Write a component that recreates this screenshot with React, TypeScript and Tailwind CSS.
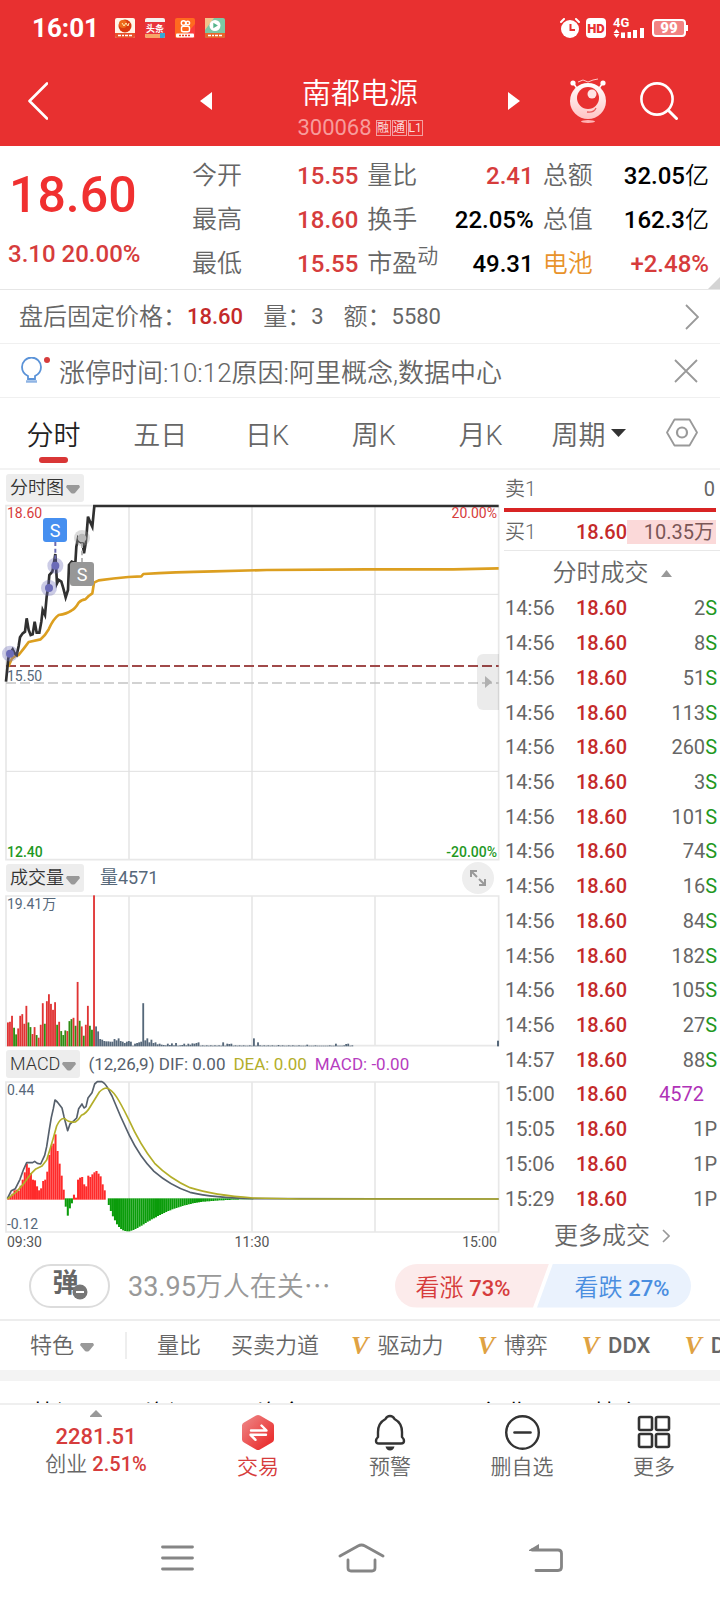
import type { FC, ReactNode } from 'react'
import { useState } from 'react'

const QUOTE_COLUMNS: { label: string; sup?: string; value: string; labelClass?: string; valueClass: string }[][] = [
  [
    { label: '今开', value: '15.55', valueClass: 'text-[#d63c3c]' },
    { label: '最高', value: '18.60', valueClass: 'text-[#d63c3c]' },
    { label: '最低', value: '15.55', valueClass: 'text-[#d63c3c]' },
  ],
  [
    { label: '量比', value: '2.41', valueClass: 'text-[#d63c3c]' },
    { label: '换手', value: '22.05%', valueClass: 'text-black' },
    { label: '市盈', sup: '动', value: '49.31', valueClass: 'text-black' },
  ],
  [
    { label: '总额', value: '32.05亿', valueClass: 'text-black' },
    { label: '总值', value: '162.3亿', valueClass: 'text-black' },
    { label: '电池', value: '+2.48%', labelClass: 'text-[#e8922a]', valueClass: 'text-[#d63c3c]' },
  ],
]

const PERIODS = ['分时', '五日', '日K', '周K', '月K']

const TRADES: [string, string, string][] = [
  ['14:56', '2', 'S'],
  ['14:56', '8', 'S'],
  ['14:56', '51', 'S'],
  ['14:56', '113', 'S'],
  ['14:56', '260', 'S'],
  ['14:56', '3', 'S'],
  ['14:56', '101', 'S'],
  ['14:56', '74', 'S'],
  ['14:56', '16', 'S'],
  ['14:56', '84', 'S'],
  ['14:56', '182', 'S'],
  ['14:56', '105', 'S'],
  ['14:56', '27', 'S'],
  ['14:57', '88', 'S'],
  ['15:00', '4572', ''],
  ['15:05', '1', 'P'],
  ['15:06', '1', 'P'],
  ['15:29', '1', 'P'],
]

const PRICE_LINE =
  '18,845 25,775 30,760 38,748 44,760 50,765 56,738 60,712 68,700 75,695 80,655 86,690 92,705 98,703 104,665 110,698 118,698 124,665 128,630 135,645 140,590 145,560 148,525 157,515 160,500 166,462 171,550 176,540 184,545 190,565 197,592 204,570 207,495 215,485 226,490 229,440 234,415 240,425 248,430 252,460 257,430 260,400 264,350 270,365 277,380 283,318 1496,318'

const AVG_LINE =
  'M25 800 L36 775 L46 768 L56 765 L74 742 L86 726 L122 718 Q136 706 146 688 Q160 656 176 645 Q200 642 214 632 Q226 626 236 608 Q246 598 256 598 L266 588 L277 580 L282 548 L296 541 Q340 535 385 531 L424 529 L430 522 Q520 516 640 514 L800 510 L1100 508 L1360 508 L1496 505'

// 每分钟成交量，r 红 g 绿 s 灰蓝
const VOLUMES =
  '72r 74r 92r 56g 36g 54r 92r 97r 68r 122r 72g 58g 37r 58r 34g 26r 65r 130r 68g 136r 157r 128r 110r 133r 65g 74r 46g 34g 48g 46r 76g 82g 86r 62g 194r 77g 60r 32g 65r 122r 62g 50g 455r 60s 45s 22s 20s 16s 15s 15s 14s 14s 22s 18s 24s 16s 14s 10s 14s 16s 14s 2s 8s 10s 12s 14s 130s 18s 24s 12s 20s 10s 12s 6s 8s 5s 4s 3s 8s 4s 9s 3s 10s 2s 3s 4s 8s 3s 8s 5s 9s 8s 10s 12s 2s 3s 2s 3s 2s 3s 2s 3s 2s 3s 2s 12s 2s 8s 7s 8s 2s 3s 2s 3s 2s 3s 2s 2s 3s 2s 24s 2s 12s 3s 2s 3s 2s 3s 2s 3s 2s 2s 4s 2s 3s 2s 2s 3s 2s 3s 2s 2s 3s 2s 2s 2s 5s 2s 2s 2s 3s 2s 2s 2s 2s 2s 2s 3s 2s 2s 8s 2s 2s 2s 3s 7s 8s 2s 3s'
    .split(' ')
    .map((v) => ({ h: parseInt(v, 10), kind: v.slice(-1) }))

const VOLUME_FILL: Record<string, string> = { r: '#e03434', g: '#2f8c12', s: '#56687a' }

const MACD_BARS = [
  4, 10, 18, 28, 30, 26, 42, 60, 82, 108, 96, 80, 60, 58, 40, 28, 34, 56, 60, 84, 134, 162, 168, 196, 146, 108, 72, 30,
  -25, -52, -30, -15, 15, 6, 60, 66, 68, 46, 40, 72, 68, 76, 82, 86, 78, 70, 46, 28, 0, -20, -38, -54, -66, -78, -86,
  -92, -96, -98, -99, -99, -97, -95, -92, -89, -85, -82, -78, -74, -70, -67, -63, -60, -57, -53, -50, -47, -44, -41,
  -38, -36, -33, -31, -29, -27, -25, -23, -21, -20, -18, -17, -15, -14, -13, -12, -11, -10, -10, -9, -9, -8, -8, -7,
  -7, -6, -6, -6, -5, -5, -5, -4, -4, -4, -4, -3, -3, -3, -3, -3, -3, -3,
]

const DIF_LINE =
  'M22 1076 L34 1052 L46 1046 L60 1018 L70 990 L80 968 L98 968 L104 964 L112 970 L122 972 L134 946 L140 920 L148 868 L154 832 L160 806 L165 780 L172 786 L186 804 L192 830 L203 872 L210 852 L222 842 L230 834 L236 806 L246 792 L252 804 L258 800 L264 774 L276 758 L284 732 L292 725 L306 725 C320 730 324 748 336 768 Q360 828 388 886 Q420 952 462 994 Q510 1036 570 1057 Q640 1073 760 1076 L1496 1077'

const DEA_LINE =
  'M22 1077 L50 1055 L72 1030 L94 1000 L106 988 L126 978 L140 960 L150 928 L160 894 L170 858 Q182 832 194 836 Q206 848 226 846 Q236 840 244 826 Q260 820 272 798 L298 756 Q310 744 320 744 C340 748 358 782 386 838 Q420 914 464 970 Q510 1016 570 1043 Q640 1066 760 1074 L900 1077 L1496 1077'

const Caret: FC<{ className?: string }> = ({ className = '' }) => (
  <svg viewBox="0 0 14 9" className={`h-[9px] w-[14px] shrink-0 ${className}`} aria-hidden="true">
    <path d="M1 0H13L14 2 9 8 Q7 9 5 8 L0 2Z" fill="currentColor" />
  </svg>
)

const Grid: FC<{ y: number; height: number }> = ({ y, height }) => (
  <g stroke="#e8e8e8" strokeWidth="5" fill="none">
    <path d={`M18 ${y}H1496V${y + height}H18Z`} />
    <path d={`M387 ${y}v${height}M756 ${y}v${height}M1125 ${y}v${height}`} />
  </g>
)

const ChartPicker: FC<{ children: ReactNode }> = ({ children }) => (
  <button type="button" className="flex h-7 items-center gap-[2px] rounded-[3px] bg-[#ededed] px-1 text-[18px] leading-7 font-[350] text-[#333]">
    {children}
    <Caret className="mt-1 text-[#999]" />
  </button>
)

const StatusBar: FC = () => (
  <div className="flex h-14 items-center px-8 text-white">
    <span className="text-[26px] leading-7 font-bold">16:01</span>
    <div className="ml-4 flex flex-1 gap-[10px]">
      <svg viewBox="0 0 20 20" className="size-5" aria-hidden="true">
        <rect width="20" height="20" rx="2" fill="#fff6e8" />
        <circle cx="10" cy="8" r="6.500" fill="#d93a10" />
        <circle cx="8" cy="6" r="4" fill="#ee6a1c" />
        <path d="m7 5 2 3 2-3 2 3 1-3" stroke="#ffe9b0" strokeWidth="1" fill="none" />
        <path d="M0 15h20v3a2 2 0 0 1-2 2H2a2 2 0 0 1-2-2Z" fill="#e8502a" />
        <path d="M3 17.500h3m1 0h2m1 0h3m1 0h3" stroke="#fff" strokeWidth="1.600" />
      </svg>
      <svg viewBox="0 0 20 20" className="size-5" aria-hidden="true">
        <rect width="20" height="20" rx="2" fill="#f4f1ef" />
        <rect y="4" width="20" height="12" fill="#e8343c" />
        <text x="10" y="13.500" fontSize="9" fontWeight="700" fill="#fff" textAnchor="middle">头条</text>
        <path d="M0 16h20v2a2 2 0 0 1-2 2H2a2 2 0 0 1-2-2Z" fill="#f7a368" />
        <path d="M15 15h5v3a2 2 0 0 1-2 2h-3Z" fill="#35a7d6" />
      </svg>
      <svg viewBox="0 0 20 20" className="size-5" aria-hidden="true">
        <rect width="20" height="20" rx="2" fill="#ff6a1f" />
        <path d="M8 20 20 6v12a2 2 0 0 1-2 2Z" fill="#fb3b3b" />
        <g fill="none" stroke="#fff" strokeWidth="1.400">
          <circle cx="8.500" cy="5" r="2.200" />
          <circle cx="12.800" cy="5" r="1.800" />
          <rect x="6.500" y="8.200" width="8" height="5.500" rx="1.800" />
        </g>
        <rect x="1" y="15.500" width="18" height="4" rx="1" fill="#fff" />
        <path d="M4 17.500h12" stroke="#e8452a" strokeWidth="1.600" strokeDasharray="2 1" />
      </svg>
      <svg viewBox="0 0 20 20" className="size-5" aria-hidden="true">
        <rect width="20" height="20" rx="2" fill="#7cc7a4" />
        <path d="M0 0h9L0 12Z" fill="#f2c28c" />
        <circle cx="10" cy="7.500" r="5.500" fill="#fff" />
        <path d="m8.300 4.800 4.600 2.700-4.600 2.700Z" fill="#55b48c" />
        <path d="M0 15h20v3a2 2 0 0 1-2 2H2a2 2 0 0 1-2-2Z" fill="#e8642a" />
        <path d="M3 17.500h3m1 0h2m1 0h3m1 0h3" stroke="#fff" strokeWidth="1.600" />
      </svg>
    </div>
    <div className="flex items-center gap-[6px]">
      <svg viewBox="0 0 20 20" className="size-5" aria-hidden="true">
        <circle cx="10" cy="11" r="9" fill="#fff" />
        <path d="m1 4 3-3M19 4l-3-3" stroke="#fff" strokeWidth="2" strokeLinecap="round" />
        <path d="M10.500 6v6H15" stroke="#e83030" strokeWidth="2" fill="none" />
      </svg>
      <span className="flex h-5 w-5 items-center justify-center rounded-[4px] bg-white text-[13px] leading-none font-black text-[#e83030]">HD</span>
      <div className="relative h-5 w-[34px]">
        <span className="absolute -top-[2px] left-px text-[13px] leading-[14px] font-bold">4G</span>
        <svg viewBox="0 0 34 20" className="h-5 w-[34px]" aria-hidden="true">
          <path d="m4.500 11 3 4h-6ZM4.500 20l3-4h-6Z" fill="#fff" />
          <path d="M9 14.500h4V20H9ZM15.500 14h3.500v6h-3.500ZM21 12h4v8h-4ZM28 10h4v10h-4Z" fill="#fff" />
        </svg>
      </div>
      <div className="flex items-center">
        <span className="flex h-[18px] w-[34px] items-center justify-center rounded-[4px] border-2 border-white bg-[#f28282] text-[15px] leading-none font-black">99</span>
        <span className="h-[6px] w-[2px] bg-white" />
      </div>
    </div>
  </div>
)

const TitleBar: FC = () => (
  <div className="grid h-[90px] grid-cols-[1fr_320px_1fr] items-center text-white">
    <button type="button" aria-label="返回" className="justify-self-start pl-[28px]">
      <svg viewBox="0 0 20 38" className="h-[38px] w-5" aria-hidden="true">
        <path d="M19 1.500 1.500 19 19 36.500" fill="none" stroke="currentColor" strokeWidth="2.600" strokeLinecap="round" strokeLinejoin="round" />
      </svg>
    </button>
    <div className="flex items-center justify-between">
      <button type="button" aria-label="上一只">
        <svg viewBox="0 0 12 18" className="h-[18px] w-3" aria-hidden="true"><path d="M12 0v18L0 9Z" fill="currentColor" /></svg>
      </button>
      <div className="flex flex-col items-center pt-[15px]">
        <h1 className="text-[29px] leading-[38px] font-[350]">南都电源</h1>
        <div className="flex items-center gap-1 text-[22px] leading-[30px] text-[#f79c9c]">
          300068
          <span className="flex gap-px text-[12px] leading-[14px] text-[#fbdcdc]">
            <span className="flex w-[15px] justify-center border border-[#f4a0a0]">融</span>
            <span className="flex w-[15px] justify-center border border-[#f4a0a0]">通</span>
            <span className="flex w-[15px] justify-center border border-[#f4a0a0]">L1</span>
          </span>
        </div>
      </div>
      <button type="button" aria-label="下一只">
        <svg viewBox="0 0 12 18" className="h-[18px] w-3" aria-hidden="true"><path d="M0 0v18L12 9Z" fill="currentColor" /></svg>
      </button>
    </div>
    <div className="flex items-center justify-end gap-[33px] pr-[42px]">
      <button type="button" aria-label="智能助手">
        <svg viewBox="0 0 38 46" className="h-[46px] w-[38px]" aria-hidden="true">
          <defs>
            <linearGradient id="bot" x1="0" y1="0" x2="0" y2="1">
              <stop offset="0" stopColor="#fff" />
              <stop offset="1" stopColor="#ffc4c4" />
            </linearGradient>
          </defs>
          <circle cx="4" cy="5" r="2.600" fill="#fff" />
          <circle cx="34" cy="5" r="2.600" fill="#fff" />
          <path d="m5 6 4 6M33 6l-4 6" stroke="#fff" strokeWidth="1.500" />
          <path d="m9 4 5-2 5 2 5-2 5-1" stroke="#ffc9c9" strokeWidth="1" fill="none" />
          <circle cx="19" cy="23" r="18" fill="url(#bot)" />
          <circle cx="19" cy="20" r="11" fill="#e83030" />
          <circle cx="23" cy="16" r="4.500" fill="#ffe3e3" />
          <path d="M18 34q7 1 9-4" stroke="#e85a5a" strokeWidth="1.300" fill="none" />
          <ellipse cx="19" cy="43.500" rx="7" ry="1.500" fill="#ffb3b3" />
        </svg>
      </button>
      <button type="button" aria-label="搜索">
        <svg viewBox="0 0 38 38" className="size-[38px]" aria-hidden="true">
          <circle cx="17" cy="17" r="15.600" fill="none" stroke="currentColor" strokeWidth="2.600" />
          <path d="m28.500 28.500 8 8" stroke="currentColor" strokeWidth="3" strokeLinecap="round" />
        </svg>
      </button>
    </div>
  </div>
)

const QuotePanel: FC = () => (
  <section className="relative flex border-b border-[#e6e6e6] pt-2 pr-[11px] pb-[3px]">
    <div className="w-[192px] shrink-0">
      <div className="pt-[13px] pl-[9px] text-[50px] leading-[56px] font-medium text-[#f03030]">18.60</div>
      <div className="pt-4 pl-2 text-[24px] leading-[30px] font-medium text-[#d63c3c]">3.10 20.00%</div>
    </div>
    <div className="grid flex-1 grid-cols-3 gap-[9px]">
      {QUOTE_COLUMNS.map((column, i) => (
        <dl key={i}>
          {column.map((item) => (
            <div key={item.label} className="flex h-11 items-center justify-between">
              <dt className={`flex text-[25px] leading-9 font-[350] ${item.labelClass ?? 'text-[#666]'}`}>
                {item.label}
                {item.sup && <sup className="top-0 text-[21px] leading-5">{item.sup}</sup>}
              </dt>
              <dd className={`text-[24px] leading-9 font-medium ${item.valueClass}`}>
                {item.value.replace('亿', '')}
                {item.value.endsWith('亿') && <span className="font-[350]">亿</span>}
              </dd>
            </div>
          ))}
        </dl>
      ))}
    </div>
    <svg viewBox="0 0 12 12" className="absolute right-0 bottom-0 size-3" aria-hidden="true">
      <path d="M12 0v12H0Z" fill="#d4d4d4" />
    </svg>
  </section>
)

const PriceChart: FC = () => (
  <div className="relative">
    <svg viewBox="18 315 1479 1065" preserveAspectRatio="none" className="block h-[355px] w-full overflow-visible" aria-hidden="true">
      <Grid y={317} height={1062} />
      <path d="M18 583H1496M18 1114H1496" stroke="#e0e0e0" strokeWidth="3" />
      <path d="M18 849H1496" stroke="#c4c4c4" strokeWidth="5" strokeDasharray="30 12" />
      <path d="M18 798H1496" stroke="#a04a4a" strokeWidth="6" strokeDasharray="30 12" />
      <path d={AVG_LINE} fill="none" stroke="#dc9f20" strokeWidth="8" strokeLinejoin="round" />
      <polyline points={PRICE_LINE} fill="none" stroke="#303030" strokeWidth="8" />
      <path d="M166 426v50" stroke="#6a6ab0" strokeWidth="6" strokeDasharray="12 8" />
      <path d="M246 430v60" stroke="#b5b5b5" strokeWidth="6" strokeDasharray="14 8" />
      {[[30, 761], [147, 564], [166, 497]].map(([x, y]) => (
        <g key={x} fill="#6c6cb8">
          <circle cx={x} cy={y} r="24" opacity="0.35" />
          <circle cx={x} cy={y} r="12" />
        </g>
      ))}
      <circle cx="246" cy="414" r="24" fill="#999" opacity="0.35" />
      <circle cx="246" cy="414" r="13" fill="#b8b8b8" />
    </svg>
    <span className="absolute top-0 left-px text-[14px] leading-4 text-[#d63c3c]">18.60</span>
    <span className="absolute top-0 right-[2px] text-[14px] leading-4 text-[#d63c3c]">20.00%</span>
    <span className="absolute top-[163px] left-px text-[14px] leading-4 text-[#56687a]">15.50</span>
    <span className="absolute bottom-0 left-px text-[14px] leading-4 font-medium text-[#1f981f]">12.40</span>
    <span className="absolute right-[2px] bottom-0 text-[14px] leading-4 font-medium text-[#1f981f]">-20.00%</span>
    <span className="absolute top-[13px] left-[37px] flex size-6 items-center justify-center rounded-[3px] bg-[#468ff0] text-[18px] text-white">S</span>
    <span className="absolute top-[57px] left-[64px] flex size-6 items-center justify-center rounded-[3px] bg-[#979797] text-[18px] text-white">S</span>
    <button type="button" aria-label="展开" className="absolute top-[149px] right-0 flex h-14 w-[22px] items-center justify-center rounded-l-[6px] bg-black/8">
      <svg viewBox="0 0 7 12" className="h-3 w-[7px]" aria-hidden="true"><path d="M0 0 7 6 0 12Z" fill="#b0b0b0" /></svg>
    </button>
  </div>
)

const VolumeChart: FC = () => (
  <div className="relative">
    <svg viewBox="18 168 1479 452" preserveAspectRatio="none" className="block h-[150px] w-full overflow-visible" aria-hidden="true">
      <Grid y={168} height={451} />
      {VOLUMES.map(({ h, kind }, i) => (
        <rect key={i} x={21 + i * 6.15} y={621 - h} width="5.500" height={h} fill={VOLUME_FILL[kind]} />
      ))}
      <rect x="1491" y="604" width="6" height="17" fill="#56687a" />
    </svg>
    <span className="absolute top-0 left-px text-[14px] leading-4 text-[#56687a]">19.41万</span>
  </div>
)

const MacdChart: FC = () => (
  <div className="relative">
    <svg viewBox="18 726 1479 450" preserveAspectRatio="none" className="block h-[150px] w-full overflow-visible" aria-hidden="true">
      <Grid y={726} height={450} />
      {MACD_BARS.map((v, i) => (
        <rect key={i} x={22 + i * 6.15} y={v > 0 ? 1079 - v : 1075} width="6.150" height={Math.abs(v)} fill={v > 0 ? '#ff2a2a' : '#0a9c0a'} />
      ))}
      <path d={DIF_LINE} fill="none" stroke="#56606c" strokeWidth="5" strokeLinejoin="round" />
      <path d={DEA_LINE} fill="none" stroke="#b3ae2a" strokeWidth="5" strokeLinejoin="round" />
    </svg>
    <span className="absolute top-0 left-px text-[14px] leading-4 text-[#56687a]">0.44</span>
    <span className="absolute bottom-0 left-px text-[14px] leading-4 text-[#56687a]">-0.12</span>
  </div>
)

const ChartColumn: FC = () => (
  <div className="min-w-0 flex-1 pr-[5px] pl-[6px]">
    <div className="flex h-[35px] items-center">
      <ChartPicker>分时图</ChartPicker>
    </div>
    <PriceChart />
    <div className="flex h-9 items-center">
      <ChartPicker>成交量</ChartPicker>
      <span className="ml-4 flex-1 text-[18px] leading-6 text-[#56687a]">量4571</span>
      <button type="button" aria-label="全屏" className="mr-[5px] flex size-8 items-center justify-center rounded-full bg-[#eee]">
        <svg viewBox="0 0 18 18" className="size-[18px]" aria-hidden="true" fill="none" stroke="#999" strokeWidth="2">
          <path d="M2 8V2h6M2 2l6 6M16 10v6h-6M16 16l-6-6" />
        </svg>
      </button>
    </div>
    <VolumeChart />
    <div className="flex h-9 items-center text-[17px] leading-6 whitespace-nowrap">
      <ChartPicker>MACD</ChartPicker>
      <span className="ml-2 text-[#56606c]">(12,26,9) DIF: 0.00</span>
      <span className="ml-2 text-[#b3ae2a]">DEA: 0.00</span>
      <span className="ml-2 text-[#b63cc0]">MACD: -0.00</span>
    </div>
    <MacdChart />
    <div className="flex h-5 items-center justify-between pr-[2px] pl-px text-[14px] leading-4 text-[#555]">
      <span>09:30</span>
      <span>11:30</span>
      <span>15:00</span>
    </div>
  </div>
)

const TradeColumn: FC = () => (
  <aside className="flex w-[216px] shrink-0 flex-col text-[20px] leading-7 text-[#666]">
    <div className="flex h-[38px] items-center justify-between pr-[5px] pl-px">
      <span className="font-[350]">卖1</span>
      <span>0</span>
    </div>
    <div className="mr-1 h-1 bg-[#d82424]" />
    <div className="flex h-[38px] items-center pt-[2px] pr-1 pl-px">
      <span className="w-[71px] font-[350]">买1</span>
      <span className="w-[51px] font-medium text-[#c42a2a]">18.60</span>
      <span className="h-6 flex-1 bg-[#fbd9d9] pr-[2px] text-right leading-6 text-[#7a5656]">10.35万</span>
    </div>
    <button type="button" className="flex h-[41px] items-center justify-center gap-3 border-t border-[#e8e8e8] pt-1 text-[24px] leading-8 font-[350]">
      分时成交
      <svg viewBox="0 0 11 7" className="h-[7px] w-[11px]" aria-hidden="true"><path d="M5.500 0 11 7H0Z" fill="#999" /></svg>
    </button>
    <div className="min-h-0 flex-1">
      <table className="h-[625px] w-full border-collapse">
        <tbody>
          {TRADES.map(([time, count, side], i) => (
            <tr key={i} className="leading-6">
              <td className="w-[72px] p-0 pl-px">{time}</td>
              <td className="p-0 font-medium text-[#c42a2a]">18.60</td>
              <td className={side ? 'p-0 pr-[3px] text-right' : 'p-0 pr-4 text-right text-[#b032b8]'}>
                {count}
                <span className={side === 'S' ? 'text-[#1f981f]' : ''}>{side}</span>
              </td>
            </tr>
          ))}
        </tbody>
      </table>
    </div>
    <button type="button" className="flex h-9 items-center justify-center gap-3 pt-1 text-[24px] leading-8 font-[350]">
      更多成交
      <svg viewBox="0 0 8 14" className="h-[14px] w-2" aria-hidden="true"><path d="m1 1 6 6-6 6" fill="none" stroke="#999" strokeWidth="1.600" /></svg>
    </button>
  </aside>
)

const GoldV: FC = () => (
  <span className="font-['Liberation_Serif',serif] text-[26px] leading-7 font-bold text-[#dfa243] italic" aria-hidden="true">V</span>
)

const FeatureTabs: FC = () => (
  <nav className="flex h-[49px] items-center overflow-hidden text-[22px] leading-8 font-[350] whitespace-nowrap text-[#666]">
    <button type="button" className="flex shrink-0 items-center gap-[6px] pl-[30px]">
      特色
      <Caret className="mt-1 text-[#999]" />
    </button>
    <span className="ml-[31px] h-[27px] w-[2px] shrink-0 bg-[#eee]" />
    <div className="ml-[30px] flex shrink-0 gap-[30px]">
      <a href="#volume-ratio">量比</a>
      <a href="#force">买卖力道</a>
    </div>
    <div className="ml-8 flex shrink-0 gap-[34px]">
      <a href="#drive" className="flex items-center gap-[9px]"><GoldV />驱动力</a>
      <a href="#game" className="flex items-center gap-[9px]"><GoldV />博弈</a>
      <a href="#ddx" className="flex items-center gap-[9px] font-medium"><GoldV />DDX</a>
      <a href="#ddy" className="flex items-center gap-[9px] font-medium"><GoldV />DDY</a>
    </div>
  </nav>
)

const BottomNav: FC = () => (
  <nav className="grid h-[86px] grid-cols-[192px_repeat(4,1fr)] border-t-2 border-[#efefef] text-[21px] leading-7 font-[350] text-[#666]">
    <button type="button" className="flex flex-col items-center pt-[5px]">
      <svg viewBox="0 0 12 7" className="h-[7px] w-3" aria-hidden="true"><path d="M6 0 12 6v1H0V6Z" fill="#999" /></svg>
      <span className="pt-[7px] text-[22px] leading-[26px] font-medium text-[#d63c3c]">2281.51</span>
      <span>创业 <span className="text-[20px] font-medium text-[#d63c3c]">2.51%</span></span>
    </button>
    <button type="button" className="flex flex-col items-center gap-[2px] pt-[9px] text-[#d63c3c]">
      <svg viewBox="0 0 34 37" className="h-[37px] w-[34px]" aria-hidden="true">
        <defs>
          <linearGradient id="trade" x1="0" y1="0" x2="1" y2="1">
            <stop offset="0" stopColor="#ee8c8c" />
            <stop offset="0.800" stopColor="#ea3434" />
          </linearGradient>
        </defs>
        <path d="M15 1.500q2-1 4 0l12 7q2 1 2 3v14q0 2-2 3l-12 7q-2 1-4 0l-12-7q-2-1-2-3v-14q0-2 2-3Z" fill="url(#trade)" />
        <path d="M10 16.500h15.500l-5-5M25 20.800H9.500l5 5" fill="none" stroke="#fff" strokeWidth="2.400" strokeLinecap="round" strokeLinejoin="round" />
      </svg>
      交易
    </button>
    <button type="button" className="flex flex-col items-center gap-[2px] pt-[9px]">
      <svg viewBox="0 0 32 37" className="h-[37px] w-8" aria-hidden="true">
        <path d="M16 2q3 0 4.500 3Q28 9 28 18v5q2 2 2 4 0 2.500-3 2.500H5q-3 0-3-2.500 0-2 2-4v-5Q4 9 11.500 5 13 2 16 2Z" fill="none" stroke="#333" strokeWidth="2.400" strokeLinejoin="round" />
        <path d="M11.500 32.500h9q-1 4-4.500 4t-4.500-4Z" fill="#333" />
      </svg>
      预警
    </button>
    <button type="button" className="flex flex-col items-center gap-[2px] pt-[9px]">
      <svg viewBox="0 0 37 37" className="size-[37px]" aria-hidden="true">
        <circle cx="18.500" cy="18.500" r="16.300" fill="none" stroke="#333" strokeWidth="2.400" />
        <path d="M10.500 18.500h16" stroke="#333" strokeWidth="2.600" strokeLinecap="round" />
      </svg>
      删自选
    </button>
    <button type="button" className="flex flex-col items-center gap-[2px] pt-[9px]">
      <svg viewBox="0 0 37 37" className="size-[37px]" aria-hidden="true" fill="none" stroke="#333" strokeWidth="2.600">
        <rect x="3" y="3" width="13" height="13" rx="1.500" />
        <rect x="20" y="3" width="13" height="13" rx="1.500" />
        <rect x="3" y="20" width="13" height="13" rx="1.500" />
        <rect x="20" y="20" width="13" height="13" rx="1.500" />
      </svg>
      更多
    </button>
  </nav>
)

const SystemNav: FC = () => (
  <div className="flex h-[109px] items-center justify-center gap-36 pt-8 pb-1 pl-1 text-[#858585]">
    <button type="button" aria-label="最近任务">
      <svg viewBox="0 0 33 26" className="h-[26px] w-[33px]" aria-hidden="true">
        <path d="M1.500 2h30M1.500 13h30M1.500 24h30" stroke="currentColor" strokeWidth="2.800" strokeLinecap="round" />
      </svg>
    </button>
    <button type="button" aria-label="主屏幕">
      <svg viewBox="0 0 47 30" className="h-[30px] w-[47px]" aria-hidden="true">
        <path d="M2 13 20 3q3.500-2 7 0l18 10M10 17v8q0 3 3 3h21q3 0 3-3v-8" fill="none" stroke="currentColor" strokeWidth="2.800" strokeLinecap="round" />
      </svg>
    </button>
    <button type="button" aria-label="返回">
      <svg viewBox="0 0 34 28" className="h-7 w-[34px]" aria-hidden="true">
        <path d="M3 6h26q3.500 0 3.500 3.500V23q0 3.500-3.500 3.500H7" fill="none" stroke="currentColor" strokeWidth="2.800" strokeLinecap="round" />
        <path d="M0 7V6L10 0v7Z" fill="currentColor" />
      </svg>
    </button>
  </div>
)

export default function App() {
  const [period, setPeriod] = useState('分时')
  const [showTip, setShowTip] = useState(true)

  return (
    <div className="min-h-screen bg-white font-['Roboto','Noto_Sans_CJK_SC',sans-serif] text-[#666]">
      <header className="bg-[#e83030]">
        <StatusBar />
        <TitleBar />
      </header>

      <QuotePanel />

      {/* 盘后固定价格 */}
      <div className="flex h-[54px] items-center border-b border-[#f0f0f0] pr-[21px] pl-[19px] text-[24px] leading-9 font-[350]">
        <span>盘后固定价格：</span>
        <span className="text-[22px] font-medium text-[#c42a2a]">18.60</span>
        <span className="ml-5">量：</span>
        <span className="text-[22px] font-normal">3</span>
        <span className="ml-5">额：</span>
        <span className="flex-1 text-[22px] font-normal">5580</span>
        <svg viewBox="0 0 14 26" className="h-[26px] w-[14px]" aria-hidden="true"><path d="m1 1 12 12L1 25" fill="none" stroke="#999" strokeWidth="1.800" /></svg>
      </div>

      {/* 涨停原因 */}
      {showTip && (
        <div className="flex h-[54px] items-center border-b border-[#f0f0f0] pr-[22px] pl-[21px] text-[26px] leading-9 font-[350]">
          <svg viewBox="0 0 30 28" className="h-7 w-[30px]" aria-hidden="true">
            <path d="M7 22v-3q-6-3-6-9a9.500 9.500 0 0 1 19 0q0 6-6 9v3Z" fill="none" stroke="#5b93d8" strokeWidth="1.800" />
            <path d="M5 24.500h11" stroke="#8fb4e4" strokeWidth="2.500" />
            <circle cx="26" cy="3" r="3" fill="#d63c3c" />
          </svg>
          <span className="ml-2 flex-1 pt-1">涨停时间:10:12原因:阿里概念,数据中心</span>
          <button type="button" aria-label="关闭" onClick={() => setShowTip(false)}>
            <svg viewBox="0 0 24 24" className="size-6" aria-hidden="true"><path d="m1 1 22 22M23 1 1 23" stroke="#999" strokeWidth="1.800" /></svg>
          </button>
        </div>
      )}

      {/* 周期切换 */}
      <nav className="flex h-[72px] border-b-2 border-[#f3f3f3] text-[27px] leading-10 font-[350]">
        {PERIODS.map((name) => (
          <button
            key={name}
            type="button"
            onClick={() => setPeriod(name)}
            className={`flex flex-1 flex-col items-center pt-[18px] ${period === name ? 'text-[#222]' : ''}`}
          >
            {name}
            {period === name && <span className="mt-px h-[6px] w-[29px] rounded-full bg-[#d93636]" />}
          </button>
        ))}
        <button type="button" className="flex w-[110px] items-start justify-center gap-[6px] pt-[18px]">
          周期
          <svg viewBox="0 0 15 8" className="mt-[13px] h-2 w-[15px]" aria-hidden="true"><path d="M0 0h15L7.500 8Z" fill="#333" /></svg>
        </button>
        <button type="button" aria-label="设置" className="flex w-[76px] items-start justify-center pt-5">
          <svg viewBox="0 0 32 29" className="h-[29px] w-8" aria-hidden="true" fill="none" stroke="#999">
            <path d="M8.500 1.500h15L31 14.500l-7.500 13h-15L1 14.500Z" strokeWidth="1.800" strokeLinejoin="round" />
            <circle cx="16" cy="14.500" r="5" strokeWidth="2.200" />
          </svg>
        </button>
      </nav>

      <main className="flex">
        <ChartColumn />
        <TradeColumn />
      </main>

      {/* 关注与看涨看跌 */}
      <div className="flex h-[69px] items-center border-b-2 border-[#ededed] px-[29px]">
        <button type="button" className="relative flex h-11 w-[81px] items-center justify-center rounded-full border-2 border-[#dcdcdc] pr-2 pb-1 text-[26px] font-bold text-[#666]">
          弹
          <svg viewBox="0 0 16 16" className="absolute right-5 bottom-[6px] size-4" aria-hidden="true">
            <circle cx="8" cy="8" r="7.500" fill="#777" />
            <path d="M4 8h8" stroke="#fff" strokeWidth="2" />
          </svg>
        </button>
        <span className="ml-[18px] flex-1 pt-[3px] text-[27px] leading-10 font-[350] whitespace-nowrap text-[#999]">
          <span className="font-normal">33.95</span>万人在关⋯
        </span>
        <button type="button" className="h-11 w-[154px] rounded-l-full bg-[#fcebeb] pt-1 pr-[18px] text-[24px] font-[350] text-[#d63c3c] [clip-path:polygon(0_0,100%_0,138px_100%,0_100%)]">
          看涨 <span className="text-[22px] font-medium">73%</span>
        </button>
        <button type="button" className="-ml-3 h-11 w-[154px] rounded-r-full bg-[#eaf2fd] pt-1 pl-4 text-[24px] font-[350] text-[#4a8ee0] [clip-path:polygon(16px_0,100%_0,100%_100%,0_100%)]">
          看跌 <span className="text-[22px] font-medium">27%</span>
        </button>
      </div>

      <FeatureTabs />
      <div className="h-[11px] bg-[#f3f3f3]" />

      {/* 资讯标签，只露出顶部 */}
      <nav className="flex h-[22px] gap-[66px] overflow-hidden pt-[17px] pl-[33px] text-[23px] leading-8 whitespace-nowrap text-black">
        <a href="#flash">快讯</a>
        <a href="#news">资讯</a>
        <a href="#funds" className="mr-[113px]">资金</a>
        <a href="#industry">行业</a>
        <a href="#position">持仓</a>
      </nav>

      <BottomNav />
      <SystemNav />
    </div>
  )
}
